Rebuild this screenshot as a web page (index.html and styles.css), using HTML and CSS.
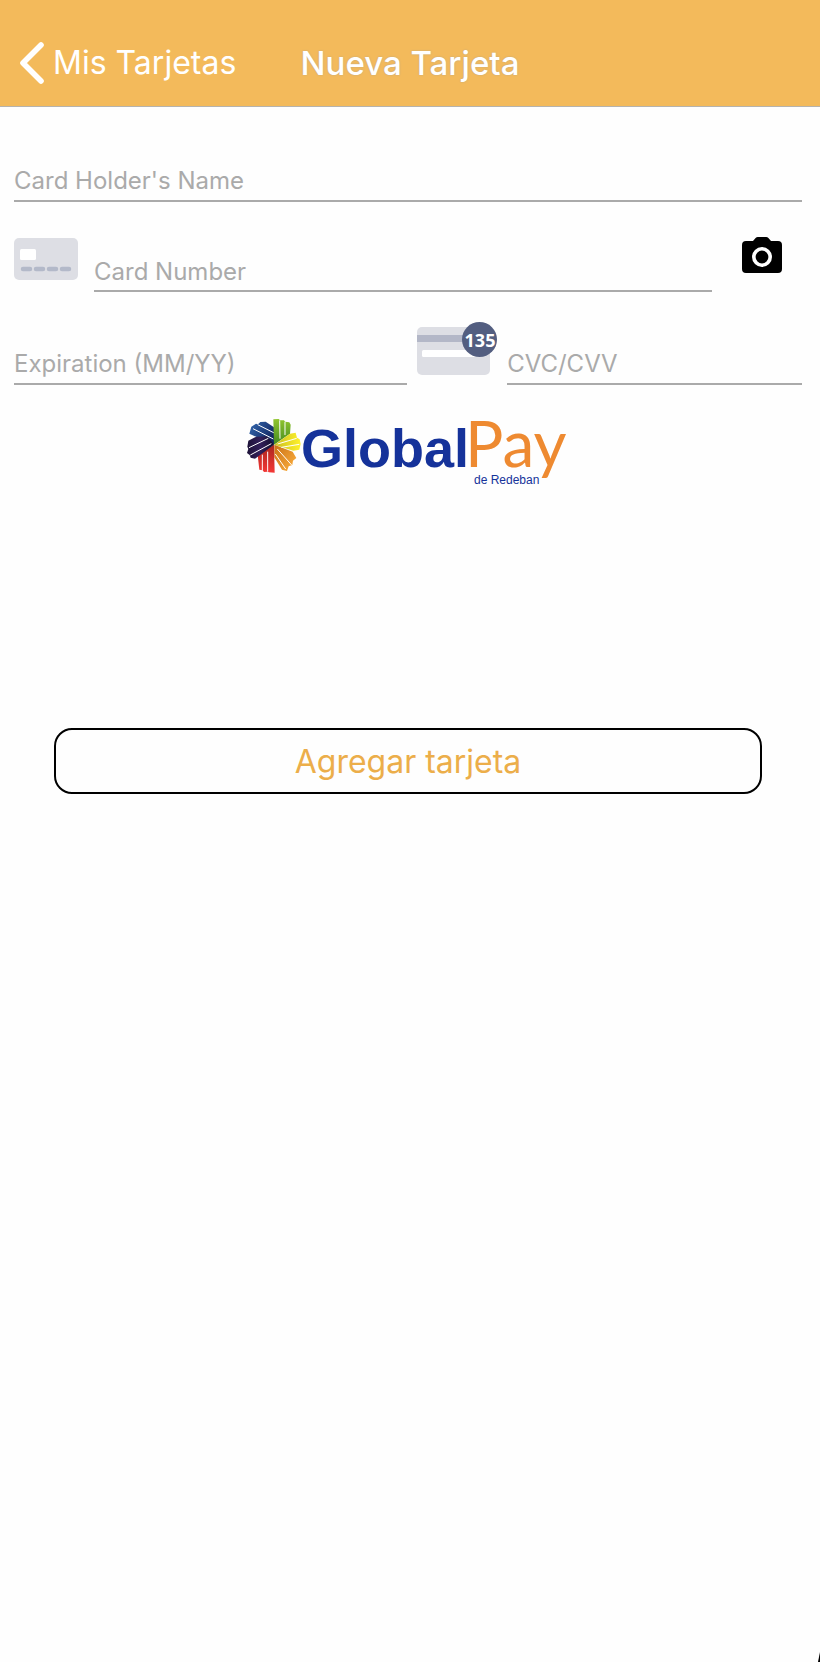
FILE: index.html
```html
<!DOCTYPE html>
<html lang="es">
<head>
<meta charset="utf-8">
<meta name="viewport" content="width=device-width, initial-scale=1">
<title>Nueva Tarjeta</title>
<link rel="stylesheet" href="styles.css">
</head>
<body>
<header class="navbar">
  <a class="back" href="#">
    <svg width="24" height="42" viewBox="0 0 24 42" fill="none" stroke="#fff" stroke-width="5.600" stroke-linecap="round" stroke-linejoin="round" aria-hidden="true"><path d="M21 3 3 21l18 18"/></svg>
    <span>Mis Tarjetas</span>
  </a>
  <h1 class="title">Nueva Tarjeta</h1>
</header>
<main>
  <form class="card-form">
    <input class="field" type="text" placeholder="Card Holder's Name" aria-label="Card Holder's Name">
    <div class="row number-row">
      <svg class="card-icon" width="64" height="42" viewBox="0 0 64 42" aria-hidden="true">
        <rect width="64" height="42" rx="5" fill="#dddee4"/>
        <rect x="6" y="11" width="16" height="11" rx="1.5" fill="#fff"/>
        <path d="M9 31h7M22 31h7M35 31h7M48 31h7" stroke="#b3b9c9" stroke-width="4.5" stroke-linecap="round"/>
      </svg>
      <input class="field" type="text" inputmode="numeric" placeholder="Card Number" aria-label="Card Number">
      <button class="scan" type="button" aria-label="Scan card">
        <svg width="40" height="36" viewBox="0 0 40 36" aria-hidden="true">
          <path d="M4 4h7l2.6-2.9A3 3 0 0 1 16 0h8a3 3 0 0 1 2.400 1.100L29 4h7a4 4 0 0 1 4 4v24a4 4 0 0 1-4 4H4a4 4 0 0 1-4-4V8a4 4 0 0 1 4-4Z"/>
          <circle cx="20" cy="20" r="8.200" fill="none" stroke="#fff" stroke-width="3.600"/>
        </svg>
      </button>
    </div>
    <div class="row expiry-row">
      <input class="field" type="text" placeholder="Expiration (MM/YY)" aria-label="Expiration (MM/YY)">
      <svg class="cvc-icon" width="80" height="63" viewBox="0 0 80 63" aria-hidden="true">
        <rect y="5" width="73" height="48" rx="5" fill="#dddee4"/>
        <path d="M0 13h73v7H0z" fill="#b3b7c7"/>
        <rect x="5" y="28" width="58" height="7" rx="1.500" fill="#fff"/>
        <circle cx="62.500" cy="17.500" r="17.500" fill="#535e80"/>
        <text class="badge-text" x="63" y="25" text-anchor="middle">135</text>
      </svg>
      <input class="field" type="text" inputmode="numeric" placeholder="CVC/CVV" aria-label="CVC/CVV">
    </div>
    <svg class="logo" width="324" height="68" viewBox="0 0 324 68" role="img" aria-label="GlobalPay de Redeban">
      <defs>
        <linearGradient id="blue" x2="1" y2=".6"><stop stop-color="#3469b0"/><stop offset="1" stop-color="#132762"/></linearGradient>
        <linearGradient id="green" x2="0" y2="1"><stop stop-color="#91c52d"/><stop offset="1" stop-color="#438a20"/></linearGradient>
        <linearGradient id="yellow"><stop stop-color="#c9bd20"/><stop offset="1" stop-color="#fff22b"/></linearGradient>
        <linearGradient id="orange" x2="1" y2="1"><stop stop-color="#c97016"/><stop offset="1" stop-color="#ffb340"/></linearGradient>
        <linearGradient id="red" x2="0" y2="1"><stop stop-color="#aa251e"/><stop offset="1" stop-color="#f43836"/></linearGradient>
        <linearGradient id="violet"><stop stop-color="#1c1237"/><stop offset=".5" stop-color="#33205a"/><stop offset="1" stop-color="#100e2b"/></linearGradient>
      </defs>
      <g transform="translate(-6 -8) scale(.3333)">
        <path fill="url(#blue)" d="m34 50 14-9 6 2 7-7 16-1 25 17v52L28 71Z"/>
        <path fill="url(#green)" d="m100 28 16-1 4 4h12l3 4 13 2 4 7-2 27-48 33Z"/>
        <path fill="url(#yellow)" d="m103 104 47-33 17-3 4 15 8 5 3 14-4 17-18 3Z"/>
        <path fill="url(#orange)" d="m103 104 55 21 11 19-10 8-2 13-11 4-5 14-15-4-23-37Z"/>
        <path fill="url(#red)" d="m53 134 49-30 2 84-17-1-4-2-11 1-4-5-10-2Z"/>
        <path fill="url(#violet)" d="m25 92 24-12 33-1 20 25-57 42-13-3-3-8-8-6 4-12-3-7Z"/>
        <path d="m39 56 61 31M53 44l48 24M119 31l1 55M135 36v39M113 102l57-17M124 112l54-9M112 117l43 48M106 132l31 45M83 125v60M67 134v48M27 113l58-28M31 135l63-34" fill="none" stroke="#fff" stroke-width="3"/>
      </g>
      <text class="brand" x="55" y="49">Global</text>
      <text class="brand-pay" x="219" y="49">Pay</text>
      <text class="brand-sub" x="228" y="66">de Redeban</text>
    </svg>
    <button class="submit" type="submit">Agregar tarjeta</button>
  </form>
</main>
<svg class="corner" width="2" height="10" viewBox="0 0 2 10" aria-hidden="true"><path d="M2 0v10H0Z"/></svg>
</body>
</html>
```
FILE: styles.css
```css
* { box-sizing: border-box; }
body {
  margin: 0;
  position: relative;
  min-height: 100vh;
  background: #fefefe;
  font-family: Inter, "Liberation Sans", sans-serif;
}
.navbar {
  display: grid;
  grid-template-columns: 1fr auto 1fr;
  align-items: center;
  padding: 37px 20px 17px;
  background: #f3ba5b;
  border-bottom: 1px solid #b5b3ae;
  color: #fff;
}
.back {
  display: flex;
  align-items: center;
  gap: 9px;
  color: #fff;
  font-size: 32px;
  line-height: 52px;
  text-decoration: none;
}
.title {
  margin: 0;
  font-size: 33px;
  line-height: 52px;
  font-weight: 500;
  text-shadow: 0 0 2px #b9a684;
}
.card-form { display: flex; flex-direction: column; padding: 53px 18px 0 14px; }
.field {
  width: 100%;
  min-width: 0;
  height: 42px;
  padding: 0;
  border: 0;
  border-bottom: 2px solid #aaa;
  border-radius: 0;
  background: transparent;
  color: #222;
  font: 400 24px/40px Inter, "Liberation Sans", sans-serif;
  outline: 0;
}
.field::placeholder { color: #aaa; opacity: 1; }
.row { display: grid; align-items: end; }
.number-row { grid-template-columns: 64px 1fr 90px; margin-top: 34px; height: 56px; }
.number-row .field { margin-left: 16px; width: auto; padding-top: 3px; }
.card-icon { align-self: start; margin-top: 2px; }
.scan {
  align-self: start;
  padding: 1px 20px 0 30px;
  border: 0;
  background: none;
}
.scan svg, .card-icon, .cvc-icon { display: block; }
.expiry-row { grid-template-columns: 4fr 80px 3fr; column-gap: 10px; margin-top: 30px; }
.badge-text { font: 700 18px "Open Sans", sans-serif; fill: #fff; }
.logo { align-self: center; margin-top: 33px; overflow: visible; }
.brand { font: 700 54px "Liberation Sans", Arial, sans-serif; fill: #15329a; }
.brand-pay { font: 400 64px Lato, sans-serif; fill: #ee8a31; }
.brand-sub { font: 400 12px "Liberation Sans", Arial, sans-serif; fill: #15329a; }
.submit {
  margin: 242px 40px 0;
  height: 66px;
  border: 2px solid #000;
  border-radius: 18px;
  background: transparent;
  color: #ecae4a;
  font: 400 32px Inter, "Liberation Sans", sans-serif;
}
.corner { position: absolute; right: 0; bottom: 0; }
```
